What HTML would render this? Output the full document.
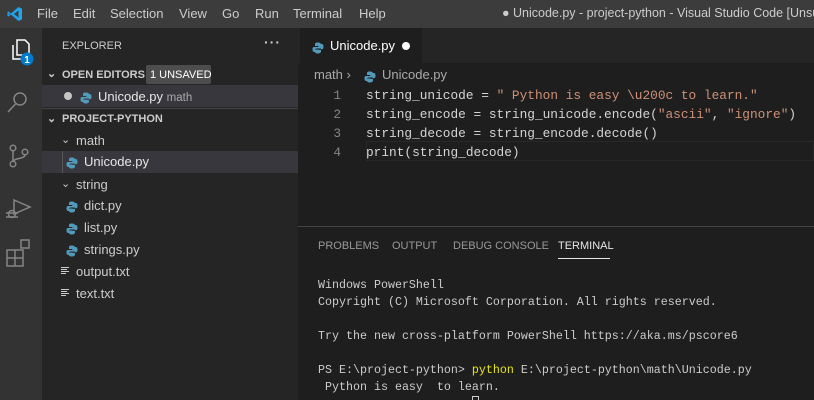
<!DOCTYPE html><html><head><style>
*{margin:0;padding:0;box-sizing:border-box}
body{width:814px;height:400px;overflow:hidden;background:#1e1e1e;font-family:"Liberation Sans",sans-serif;position:relative;color:#ccc}
.a{position:absolute;white-space:pre}
.m{font-family:"Liberation Mono",monospace}
.py{display:inline-block;width:12px;height:12px;vertical-align:-2px}
</style></head><body>
<div class="a" style="left:0;top:0;width:814px;height:28px;background:#3c3c3c"></div>
<svg class="a" style="left:7px;top:6px" width="16" height="16" viewBox="0 0 16 16"><path d="M11.5 1 L15 2.6 V13.4 L11.5 15 L4 8.5 L1.5 10.5 L0.5 10 V6 L1.5 5.5 L4 7.5 Z M11.5 4.5 L7 8 L11.5 11.5 Z M1.8 7 V9 L3 8 Z" fill="#23a3ea"/></svg>
<div class="a" style="left:37px;top:6px;font-size:13px;color:#ccc">File</div>
<div class="a" style="left:73px;top:6px;font-size:13px">Edit</div>
<div class="a" style="left:110px;top:6px;font-size:13px">Selection</div>
<div class="a" style="left:179px;top:6px;font-size:13px">View</div>
<div class="a" style="left:222px;top:6px;font-size:13px">Go</div>
<div class="a" style="left:255px;top:6px;font-size:13px">Run</div>
<div class="a" style="left:293px;top:6px;font-size:13px">Terminal</div>
<div class="a" style="left:359px;top:6px;font-size:13px">Help</div>
<div class="a" style="left:502px;top:6px;width:312px;overflow:hidden;font-size:12.5px">● Unicode.py - project-python - Visual Studio Code [Unsupported]</div>

<div class="a" style="left:0;top:28px;width:42px;height:372px;background:#333"></div>
<svg class="a" style="left:0;top:28px" width="42" height="250" viewBox="0 0 42 250" fill="none" stroke="#858585" stroke-width="1.5">
<path d="M13 17 V31 H23 M17 12 V27 H29 V16 L25 12 Z" stroke="#fff"/>
<circle cx="27" cy="31" r="6.5" fill="#007acc" stroke="none"/>
<text x="27" y="35" font-size="10" fill="#fff" stroke="none" text-anchor="middle" font-family="Liberation Sans" font-weight="bold">1</text>
<circle cx="20" cy="71" r="6"/><path d="M15.5 76 L8 84"/>
<circle cx="13" cy="120" r="2.8"/><circle cx="13" cy="136" r="2.8"/><circle cx="25" cy="124" r="2.8"/><path d="M13 123 V133 M25 127 C25 131 14 130 14 133"/>
<path d="M14 172 L30 179 L14 186 Z"/><circle cx="12" cy="186" r="3.5"/><path d="M6 185 H18 M6 189 H18"/>
<path d="M7 222 H15 V230 H7 Z M15 222 H23 V230 H15 M7 230 V238 H15 V230 M15 238 H23 V230 M21 212 H29 V220 H21 Z"/>
</svg>

<div class="a" style="left:42px;top:28px;width:256px;height:372px;background:#252526"></div>
<div class="a" style="left:62px;top:40px;font-size:11px">EXPLORER</div>
<div class="a" style="left:264px;top:34px;font-size:14px;font-weight:bold;letter-spacing:1px">···</div>
<div class="a" style="left:47px;top:67px;font-size:11px;font-weight:bold">⌄</div>
<div class="a" style="left:62px;top:69px;font-size:11px;font-weight:bold">OPEN EDITORS</div>
<div class="a" style="left:146px;top:65px;width:65px;height:19px;background:#4d4d4d;border-radius:2px"></div>
<div class="a" style="left:150px;top:69px;font-size:11px;color:#fff">1 UNSAVED</div>
<div class="a" style="left:42px;top:85px;width:256px;height:22px;background:#37373d"></div>
<div class="a" style="left:64px;top:92px;width:8px;height:8px;border-radius:50%;background:#c5c5c5"></div>
<div class="a" style="left:80px;top:89px"><svg class="py" viewBox="0 0 12 12"><path d="M6 0.5 C3 0.5 3 1.5 3 2.5 V4 H6.3 V5 H2 C0.5 5 0.5 6.5 0.5 7.5 S1 10 2 10 H3 V8.3 C3 7 4 6.5 5 6.5 H8 C9 6.5 9 5.5 9 5 V2.5 C9 1 7.5 0.5 6 0.5Z M9 4 V5.5 C9 6.5 8.5 7.5 7 7.5 H4 C3.3 7.5 3 8 3 8.8 V10 C3 11.3 5 11.5 6 11.5 S9 11 9 9.5 V8 H5.8 V7.2 H10 C11.5 7.2 11.5 5.5 11.5 4.5 S11 2 10 2 H9Z" fill="#519aba"/></svg></div>
<div class="a" style="left:98px;top:89px;font-size:13px;color:#e7e7e7">Unicode.py <span style="font-size:11.5px;color:#aaa">math</span></div>
<div class="a" style="left:42px;top:108px;width:256px;height:1px;background:#444"></div>
<div class="a" style="left:47px;top:112px;font-size:11px;font-weight:bold">⌄</div>
<div class="a" style="left:62px;top:113px;font-size:11px;font-weight:bold">PROJECT-PYTHON</div>
<div class="a" style="left:61px;top:133px;font-size:11px">⌄</div>
<div class="a" style="left:76px;top:133px;font-size:13px">math</div>
<div class="a" style="left:42px;top:151px;width:256px;height:22px;background:#37373d"></div>
<div class="a" style="left:62px;top:151px;width:1px;height:22px;background:#585858"></div>
<div class="a" style="left:66px;top:154px"><svg class="py" viewBox="0 0 12 12"><path d="M6 0.5 C3 0.5 3 1.5 3 2.5 V4 H6.3 V5 H2 C0.5 5 0.5 6.5 0.5 7.5 S1 10 2 10 H3 V8.3 C3 7 4 6.5 5 6.5 H8 C9 6.5 9 5.5 9 5 V2.5 C9 1 7.5 0.5 6 0.5Z M9 4 V5.5 C9 6.5 8.5 7.5 7 7.5 H4 C3.3 7.5 3 8 3 8.8 V10 C3 11.3 5 11.5 6 11.5 S9 11 9 9.5 V8 H5.8 V7.2 H10 C11.5 7.2 11.5 5.5 11.5 4.5 S11 2 10 2 H9Z" fill="#519aba"/></svg></div>
<div class="a" style="left:84px;top:154px;font-size:13px;color:#e7e7e7">Unicode.py</div>
<div class="a" style="left:61px;top:177px;font-size:11px">⌄</div>
<div class="a" style="left:76px;top:177px;font-size:13px">string</div>
<div class="a" style="left:66px;top:198px"><svg class="py" viewBox="0 0 12 12"><path d="M6 0.5 C3 0.5 3 1.5 3 2.5 V4 H6.3 V5 H2 C0.5 5 0.5 6.5 0.5 7.5 S1 10 2 10 H3 V8.3 C3 7 4 6.5 5 6.5 H8 C9 6.5 9 5.5 9 5 V2.5 C9 1 7.5 0.5 6 0.5Z M9 4 V5.5 C9 6.5 8.5 7.5 7 7.5 H4 C3.3 7.5 3 8 3 8.8 V10 C3 11.3 5 11.5 6 11.5 S9 11 9 9.5 V8 H5.8 V7.2 H10 C11.5 7.2 11.5 5.5 11.5 4.5 S11 2 10 2 H9Z" fill="#519aba"/></svg></div>
<div class="a" style="left:84px;top:198px;font-size:13px">dict.py</div>
<div class="a" style="left:66px;top:220px"><svg class="py" viewBox="0 0 12 12"><path d="M6 0.5 C3 0.5 3 1.5 3 2.5 V4 H6.3 V5 H2 C0.5 5 0.5 6.5 0.5 7.5 S1 10 2 10 H3 V8.3 C3 7 4 6.5 5 6.5 H8 C9 6.5 9 5.5 9 5 V2.5 C9 1 7.5 0.5 6 0.5Z M9 4 V5.5 C9 6.5 8.5 7.5 7 7.5 H4 C3.3 7.5 3 8 3 8.8 V10 C3 11.3 5 11.5 6 11.5 S9 11 9 9.5 V8 H5.8 V7.2 H10 C11.5 7.2 11.5 5.5 11.5 4.5 S11 2 10 2 H9Z" fill="#519aba"/></svg></div>
<div class="a" style="left:84px;top:220px;font-size:13px">list.py</div>
<div class="a" style="left:66px;top:242px"><svg class="py" viewBox="0 0 12 12"><path d="M6 0.5 C3 0.5 3 1.5 3 2.5 V4 H6.3 V5 H2 C0.5 5 0.5 6.5 0.5 7.5 S1 10 2 10 H3 V8.3 C3 7 4 6.5 5 6.5 H8 C9 6.5 9 5.5 9 5 V2.5 C9 1 7.5 0.5 6 0.5Z M9 4 V5.5 C9 6.5 8.5 7.5 7 7.5 H4 C3.3 7.5 3 8 3 8.8 V10 C3 11.3 5 11.5 6 11.5 S9 11 9 9.5 V8 H5.8 V7.2 H10 C11.5 7.2 11.5 5.5 11.5 4.5 S11 2 10 2 H9Z" fill="#519aba"/></svg></div>
<div class="a" style="left:84px;top:242px;font-size:13px">strings.py</div>
<svg class="a" style="left:61px;top:267px" width="9" height="8"><path d="M0 .5H8M0 2.5H6M0 4.5H8M0 6.5H5" stroke="#ccc"/></svg>
<div class="a" style="left:76px;top:264px;font-size:13px">output.txt</div>
<svg class="a" style="left:61px;top:289px" width="9" height="8"><path d="M0 .5H8M0 2.5H6M0 4.5H8M0 6.5H5" stroke="#ccc"/></svg>
<div class="a" style="left:76px;top:286px;font-size:13px">text.txt</div>

<div class="a" style="left:298px;top:28px;width:516px;height:35px;background:#252526"></div>
<div class="a" style="left:300px;top:28px;width:122px;height:35px;background:#1e1e1e"></div>
<div class="a" style="left:312px;top:39px"><svg class="py" viewBox="0 0 12 12"><path d="M6 0.5 C3 0.5 3 1.5 3 2.5 V4 H6.3 V5 H2 C0.5 5 0.5 6.5 0.5 7.5 S1 10 2 10 H3 V8.3 C3 7 4 6.5 5 6.5 H8 C9 6.5 9 5.5 9 5 V2.5 C9 1 7.5 0.5 6 0.5Z M9 4 V5.5 C9 6.5 8.5 7.5 7 7.5 H4 C3.3 7.5 3 8 3 8.8 V10 C3 11.3 5 11.5 6 11.5 S9 11 9 9.5 V8 H5.8 V7.2 H10 C11.5 7.2 11.5 5.5 11.5 4.5 S11 2 10 2 H9Z" fill="#519aba"/></svg></div>
<div class="a" style="left:330px;top:38px;font-size:13px;color:#fff">Unicode.py</div>
<div class="a" style="left:402px;top:42px;width:8px;height:8px;border-radius:50%;background:#fff"></div>
<div class="a" style="left:314px;top:67px;font-size:13px;color:#aaa">math ›</div>
<div class="a" style="left:364px;top:68px"><svg class="py" viewBox="0 0 12 12"><path d="M6 0.5 C3 0.5 3 1.5 3 2.5 V4 H6.3 V5 H2 C0.5 5 0.5 6.5 0.5 7.5 S1 10 2 10 H3 V8.3 C3 7 4 6.5 5 6.5 H8 C9 6.5 9 5.5 9 5 V2.5 C9 1 7.5 0.5 6 0.5Z M9 4 V5.5 C9 6.5 8.5 7.5 7 7.5 H4 C3.3 7.5 3 8 3 8.8 V10 C3 11.3 5 11.5 6 11.5 S9 11 9 9.5 V8 H5.8 V7.2 H10 C11.5 7.2 11.5 5.5 11.5 4.5 S11 2 10 2 H9Z" fill="#519aba"/></svg></div>
<div class="a" style="left:382px;top:67px;font-size:13px;color:#aaa">Unicode.py</div>
<div class="a" style="left:366px;top:141px;width:448px;height:20px;border:1px solid #282828"></div>
<div class="a m" style="left:300px;top:86px;width:41px;font-size:12.8px;line-height:19px;color:#858585;text-align:right">1
2
3
4</div>
<div class="a m" style="left:366px;top:86px;font-size:12.8px;line-height:19px;color:#d4d4d4">string_unicode = <span style="color:#ce9178">" Python is easy \u200c to learn."</span>
string_encode = string_unicode.encode(<span style="color:#ce9178">"ascii"</span>, <span style="color:#ce9178">"ignore"</span>)
string_decode = string_encode.decode()
print(string_decode)</div>

<div class="a" style="left:298px;top:226px;width:516px;height:1px;background:#444"></div>
<div class="a" style="left:318px;top:240px;font-size:11px;color:#999">PROBLEMS</div>
<div class="a" style="left:392px;top:240px;font-size:11px;color:#999">OUTPUT</div>
<div class="a" style="left:453px;top:240px;font-size:11px;color:#999">DEBUG CONSOLE</div>
<div class="a" style="left:558px;top:240px;font-size:11px;color:#e7e7e7">TERMINAL</div>
<div class="a" style="left:558px;top:258px;width:52px;height:1px;background:#e7e7e7"></div>
<div class="a m" style="left:318px;top:277px;font-size:11.66px;line-height:17px;color:#ccc">Windows PowerShell
Copyright (C) Microsoft Corporation. All rights reserved.

Try the new cross-platform PowerShell https://aka.ms/pscore6

PS E:\project-python> <span style="color:#e5e510">python</span> E:\project-python\math\Unicode.py
 Python is easy  to learn.</div>
<div class="a" style="left:472px;top:396px;width:7px;height:4px;border:1px solid #ccc;border-bottom:none"></div>
</body></html>
